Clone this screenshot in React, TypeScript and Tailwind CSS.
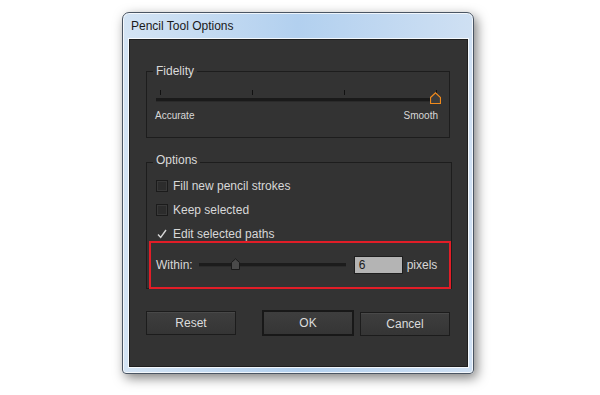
import React from 'react';

// Pencil Tool Options dialog (Illustrator, dark UI) inside a Win7 frame

function Checkbox({ checked }: { checked?: boolean }) {
  if (checked) {
    return (
      <svg width="12" height="12" viewBox="0 0 12 12" className="shrink-0">
        <path d="M2 6.5 L4.7 9.5 L10 2" fill="none" stroke="#d6d6d6" strokeWidth="1.4" />
      </svg>
    );
  }
  return <div className="w-[12px] h-[12px] shrink-0 bg-[#2c2c2c] border border-[#1b1b1b] shadow-[inset_0_0_0_1px_#393939]" />;
}

function Btn({ label, primary }: { label: string; primary?: boolean }) {
  return (
    <button
      className={
        primary
          ? 'h-[26px] w-[92px] border-2 border-[#181818] bg-gradient-to-b from-[#3e3e3e] to-[#353535] text-[12px] text-[#dcdcdc]'
          : 'h-[24px] w-[90px] border border-[#1c1c1c] bg-gradient-to-b from-[#3e3e3e] to-[#353535] text-[12px] text-[#dcdcdc] shadow-[inset_0_1px_0_rgba(255,255,255,0.06)]'
      }
    >
      {label}
    </button>
  );
}

export default function App() {
  const rows = [
    { label: 'Fill new pencil strokes', checked: false },
    { label: 'Keep selected', checked: false },
    { label: 'Edit selected paths', checked: true },
  ];

  return (
    <div
      className="w-[600px] h-[395px] bg-white pl-[122px] pt-[12px]"
      style={{ fontFamily: '"Liberation Sans", Arial, sans-serif' }}
    >
      <div className="w-[352px] h-[362px] rounded-t-[7px] rounded-b-[4px] border border-[#4a5563] bg-gradient-to-r from-[#d4e4f4] via-[#b2d0ef] to-[#cfe0f3] shadow-[3px_4px_12px_rgba(0,0,0,0.5),inset_0_0_0_1px_rgba(255,255,255,0.75)] pl-[6px] pr-[5px]">
        <div className="h-[26px] flex items-center pl-[2px] text-[12px] text-[#1a1a1a]">
          Pencil Tool Options
        </div>

        <div className="w-[339px] h-[328px] bg-[#333333] border border-[#1f1f1f] shadow-[0_0_0_1px_rgba(255,255,255,0.8)] text-[#d8d8d8]">
          {/* Fidelity */}
          <fieldset className="mt-[23px] ml-[16px] w-[304px] h-[75px] border border-[#1d1d1d]">
            <legend className="ml-[6px] px-[3px] text-[12px] leading-[16px] text-[#dadada]">Fidelity</legend>
            <div className="relative mt-[11px] ml-[9px] w-[285px]">
              <div className="flex justify-between px-[4px] h-[5px]">
                <div className="w-px h-full bg-[#111]" />
                <div className="w-px h-full bg-[#111]" />
                <div className="w-px h-full bg-[#111]" />
                <div className="w-px h-full bg-[#111]" />
              </div>
              <div className="mt-[3px] h-[4px] bg-[#1a1a1a] border-b border-[#2a2a2a]" />
              <svg className="absolute left-[274px] top-[2px]" width="11" height="12" viewBox="0 0 11 12">
                <path d="M0.5 5.5 L5.5 0.8 L10.5 5.5 L10.5 11.5 L0.5 11.5 Z" fill="#3b3b3b" stroke="#f08a1c" strokeWidth="1.2" />
              </svg>
            </div>
            <div className="mt-[7px] ml-[8px] w-[283px] flex justify-between text-[10px] leading-[14px]">
              <span>Accurate</span>
              <span>Smooth</span>
            </div>
          </fieldset>

          {/* Options */}
          <fieldset className="mt-[16px] ml-[16px] w-[304px] h-[135px] border border-[#1d1d1d]">
            <legend className="ml-[6px] px-[3px] text-[12px] leading-[16px] text-[#dadada]">
              <span className="relative top-[-2px]">Options</span>
            </legend>
            <div className="mt-[8px] ml-[9px] flex flex-col gap-[8px]">
              {rows.map((r) => (
                <div key={r.label} className="h-[16px] flex items-center gap-[5px] text-[12px]">
                  <Checkbox checked={r.checked} />
                  <span>{r.label}</span>
                </div>
              ))}
            </div>
            <div className="mt-[-1px] ml-[2px] w-[302px] h-[48px] border-2 border-[#e21d27] flex items-center pl-[5px] text-[12px]">
              <span>Within:</span>
              <div className="relative ml-[6px] w-[147px] h-[4px] bg-[#1c1c1c] border-b border-[#2b2b2b]">
                <svg className="absolute left-[32px] top-[-5px]" width="9" height="12" viewBox="0 0 9 12">
                  <path d="M0.5 4.5 L4.5 0.8 L8.5 4.5 L8.5 11.5 L0.5 11.5 Z" fill="#4a4a4a" stroke="#1a1a1a" strokeWidth="1" />
                </svg>
              </div>
              <div className="ml-[8px] w-[49px] h-[18px] bg-[#b4b4b4] border border-[#1e1e1e] pl-[4px] flex items-center text-[12px] text-[#1a1a1a]">
                6
              </div>
              <span className="ml-[4px]">pixels</span>
            </div>
          </fieldset>

          {/* Buttons */}
          <div className="mt-[21px] pl-[16px] h-[26px] flex items-center">
            <Btn label="Reset" />
            <div className="ml-[26px]">
              <Btn label="OK" primary />
            </div>
            <div className="ml-[6px]">
              <Btn label="Cancel" />
            </div>
          </div>
        </div>
      </div>
    </div>
  );
}
